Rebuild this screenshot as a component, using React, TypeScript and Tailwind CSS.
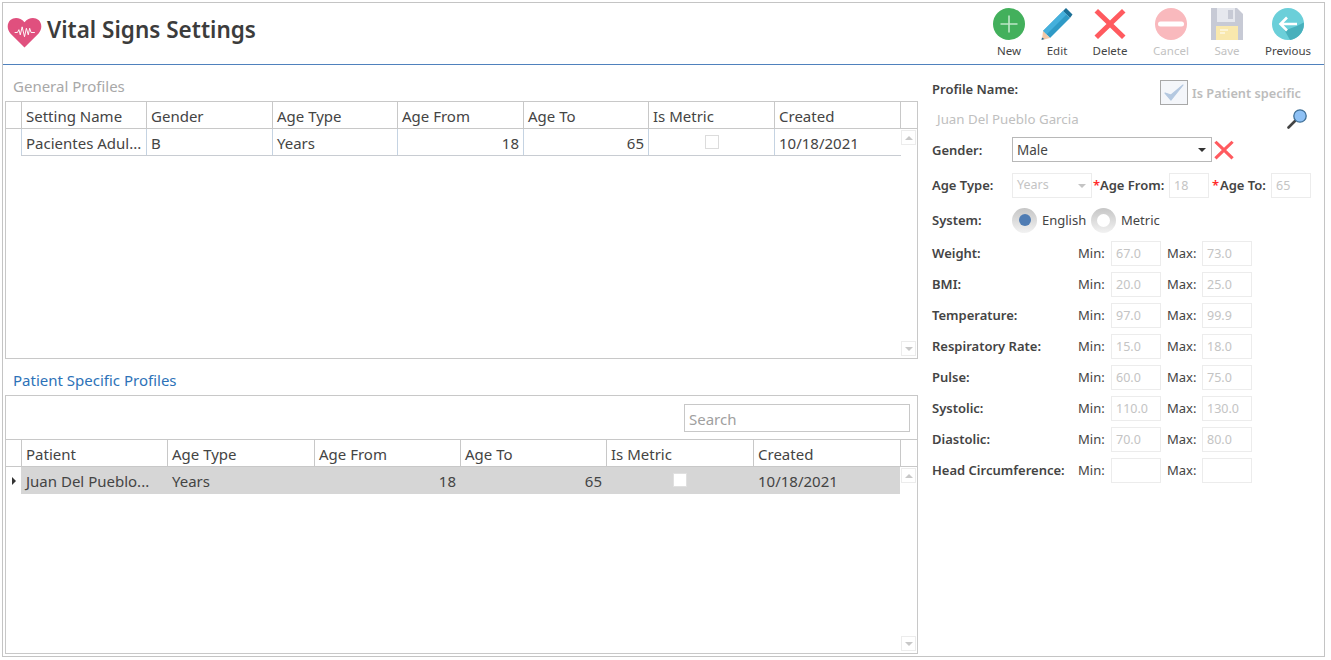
const font = "font-['Noto_Sans','Open_Sans',sans-serif]";

function Heart() {
  return (
    <svg width="35" height="31" viewBox="0 0 37 33" className="shrink-0">
      <path d="M18.5 32.5 L3.5 17.5 C-0.5 13 -0.2 6.5 3.5 3.2 C7.5 -0.2 14 0.2 18.5 5.5 C23 0.2 29.5 -0.2 33.5 3.2 C37.2 6.5 37.5 13 33.5 17.5 Z" fill="#e0507e" />
      <path d="M8 16.5 H11 L12.5 13.5 L14 19 L16 10.5 L18.5 21 L20.5 12 L22.5 19 L24 12 L25.5 16.5 H29.5" fill="none" stroke="#fff" strokeWidth="1" />
    </svg>
  );
}

function NewIcon() {
  return (
    <svg width="32" height="32" viewBox="0 0 32 32">
      <circle cx="16" cy="16" r="16" fill="#43b05c" />
      <path d="M16 7.5V24.5M7.5 16H24.5" stroke="#bfe6c8" strokeWidth="1.6" />
    </svg>
  );
}
function EditIcon() {
  return (
    <svg width="32" height="33" viewBox="0 0 32 33">
      <path d="M25 1 L31.5 7.5 L29 11 L22 4 Z" fill="#1b6f96" />
      <path d="M22 4 L29 11 L9 31 L2 24 Z" fill="#2f9ac6" />
      <path d="M22 4 L25.5 7.5 L5.5 27.5 L2 24 Z" fill="#45b0dc" />
      <path d="M2 24 L9 31 L1 33 Z" fill="#f3c9a8" />
      <path d="M1 30.5 L3.5 32 L0.5 33 Z" fill="#2f6f96" />
    </svg>
  );
}
function DeleteIcon({ size = 32 }: { size?: number }) {
  return (
    <svg width={size} height={size} viewBox="0 0 32 32">
      <path d="M4 1 L16 12.5 L28 1 L31.5 4.5 L19.5 16 L31.5 27.5 L28 31 L16 19.5 L4 31 L0.5 27.5 L12.5 16 L0.5 4.5 Z" fill="#ff5a5f" />
    </svg>
  );
}
function CancelIcon() {
  return (
    <svg width="32" height="32" viewBox="0 0 32 32">
      <circle cx="16" cy="16" r="16" fill="#f9b9bd" />
      <rect x="3" y="13.5" width="26" height="5" rx="2.5" fill="#fff" />
    </svg>
  );
}
function SaveIcon() {
  return (
    <svg width="32" height="32" viewBox="0 0 32 32">
      <path d="M0 0 H26 L32 6 V32 H0 Z" fill="#c7cad5" />
      <path d="M6 0 H24 V14 H6 Z" fill="#e6e8ee" />
      <path d="M17 2 H22 V11 H17 Z" fill="#c7cad5" />
      <path d="M5 18 H27 V32 H5 Z" fill="#f9e8ad" />
      <path d="M9 22 H17 M9 25 H14" stroke="#fff" strokeWidth="1.2" />
    </svg>
  );
}
function PreviousIcon() {
  return (
    <svg width="32" height="32" viewBox="0 0 32 32">
      <circle cx="16" cy="16" r="16" fill="#6bcfd9" />
      <path d="M9 16 L15.5 21.5 L25 18 L31.8 14.5 A16 16 0 0 1 18 31.9 Z" fill="#48b0bc" />
      <path d="M15 9.5 L8.5 16 L15 22.5 M8.5 16 H25" fill="none" stroke="#fff" strokeWidth="2.6" />
    </svg>
  );
}

function ToolButton({ label, width, icon, disabled }: { label: string; width: string; icon: React.ReactNode; disabled?: boolean }) {
  return (
    <div className={`flex flex-col items-center ${width}`}>
      <div className="flex h-[33px] items-center justify-center">{icon}</div>
      <div className={`mt-[3px] text-[11.5px] leading-[16px] ${disabled ? "text-[#c2c2c2]" : "text-[#444444]"}`}>{label}</div>
    </div>
  );
}

function ScrollButton({ up }: { up?: boolean }) {
  return (
    <div className="flex h-[15px] w-[15px] items-center justify-center border border-[#ececec] bg-white">
      <div className={`h-0 w-0 border-x-[4px] border-x-transparent ${up ? "border-b-[4px] border-b-[#c8c8c8]" : "border-t-[4px] border-t-[#c8c8c8]"}`} />
    </div>
  );
}

type Col = { title: string; width: string; right?: boolean; value?: string; check?: boolean };

function Grid({ cols, selected }: { cols: Col[]; selected?: boolean }) {
  return (
    <div className="flex min-h-0 flex-1 flex-col">
      <div className={`flex border-b border-[#c8c8c8] ${selected ? "h-[28px] border-t" : "h-[27px]"}`}>
        <div className="w-[16px] shrink-0 border-r border-[#c8c8c8]" />
        {cols.map((c) => (
          <div key={c.title} className={`${c.width} shrink-0 truncate border-r border-[#c8c8c8] pl-[4px] text-[15px] leading-[28px] text-[#444444]`}>
            {c.title}
          </div>
        ))}
      </div>
      <div className="relative flex-1">
        <div className="flex h-[27px]">
          <div className={`flex shrink-0 items-center justify-center ${selected ? "w-[15px]" : "w-[16px] border-r border-[#c5d3e2]"}`}>
            {selected && <div className="ml-[1px] h-0 w-0 border-y-[4px] border-l-[4px] border-y-transparent border-l-[#333333]" />}
          </div>
          <div className={`flex ${selected ? "bg-[#d6d6d6]" : "-ml-[1px] border-b border-[#c8ccd2] pl-[1px]"}`}>
            {cols.map((c) => (
              <div
                key={c.title}
                className={`${c.width} flex shrink-0 items-center ${c.right ? "justify-end pr-[4px]" : c.check ? "justify-center" : selected ? "pl-[5px]" : "pl-[4px]"} ${selected ? "pt-[1px]" : "border-r border-[#c5d3e2] pt-[3px] last:border-r-0"} text-[15px] text-[#444444]`}
              >
                {c.check ? (
                  <div className={`h-[14px] w-[14px] border ${selected ? "-mt-[2px] border-[#e0e0e0] bg-white" : "-mt-[4px] border-[#dcdcdc] bg-white"}`} />
                ) : (
                  c.value
                )}
              </div>
            ))}
          </div>
        </div>
        <div className="absolute bottom-[2px] right-[1px] top-[1px] flex flex-col justify-between">
          <ScrollButton up />
          <ScrollButton />
        </div>
      </div>
    </div>
  );
}

const generalCols: Col[] = [
  { title: "Setting Name", width: "w-[125px]", value: "Pacientes Adul..." },
  { title: "Gender", width: "w-[126px]", value: "B" },
  { title: "Age Type", width: "w-[125px]", value: "Years" },
  { title: "Age From", width: "w-[126px]", value: "18", right: true },
  { title: "Age To", width: "w-[125px]", value: "65", right: true },
  { title: "Is Metric", width: "w-[126px]", check: true },
  { title: "Created", width: "w-[126px]", value: "10/18/2021" },
];
const patientCols: Col[] = [
  { title: "Patient", width: "w-[146px]", value: "Juan Del Pueblo..." },
  { title: "Age Type", width: "w-[147px]", value: "Years" },
  { title: "Age From", width: "w-[146px]", value: "18", right: true },
  { title: "Age To", width: "w-[146px]", value: "65", right: true },
  { title: "Is Metric", width: "w-[147px]", check: true },
  { title: "Created", width: "w-[147px]", value: "10/18/2021" },
];

function FieldBox({ value, width }: { value?: string; width: string }) {
  return (
    <div className={`${width} flex h-[25px] shrink-0 items-center border border-[#ececec] bg-white pl-[4px] pt-[2px] text-[12.5px] text-[#c4c4c4]`}>{value}</div>
  );
}

function Radio({ on }: { on?: boolean }) {
  return (
    <div className="flex h-[25px] w-[25px] shrink-0 items-center justify-center rounded-full bg-gradient-to-b from-[#c6c6c6] to-[#f2f2f2]">
      {on ? <div className="h-[12px] w-[12px] rounded-full bg-[#4f7cb3]" /> : <div className="h-[13px] w-[13px] rounded-full bg-white" />}
    </div>
  );
}

const vitals: [string, string, string][] = [
  ["Weight:", "67.0", "73.0"],
  ["BMI:", "20.0", "25.0"],
  ["Temperature:", "97.0", "99.9"],
  ["Respiratory Rate:", "15.0", "18.0"],
  ["Pulse:", "60.0", "75.0"],
  ["Systolic:", "110.0", "130.0"],
  ["Diastolic:", "70.0", "80.0"],
  ["Head Circumference:", "", ""],
];

const label = "text-[13px] font-semibold text-[#444444]";

export default function App() {
  return (
    <div className={`h-[660px] w-[1331px] overflow-hidden bg-white pl-[2px] pt-[2px] ${font}`}>
      <div className="flex h-[655px] w-[1323px] flex-col border border-[#c4c4c4]">
        <header className="flex h-[62px] shrink-0 items-start border-b border-[#4f81bd]">
          <div className="ml-[4px] mt-[14px]"><Heart /></div>
          <h1 className="ml-[5px] mt-[9px] text-[22.5px] font-semibold leading-[36px] text-[#3c3c3c]">Vital Signs Settings</h1>
          <div className="-mr-[1px] ml-auto mt-[4px] flex">
            <ToolButton label="New" width="w-[48px]" icon={<NewIcon />} />
            <ToolButton label="Edit" width="w-[48px]" icon={<EditIcon />} />
            <ToolButton label="Delete" width="w-[58px]" icon={<DeleteIcon />} />
            <ToolButton label="Cancel" width="w-[64px]" icon={<CancelIcon />} disabled />
            <ToolButton label="Save" width="w-[48px]" icon={<SaveIcon />} disabled />
            <ToolButton label="Previous" width="w-[74px]" icon={<PreviousIcon />} />
          </div>
        </header>
        <div className="flex min-h-0 flex-1">
          <div className="flex w-[915px] shrink-0 flex-col pl-[2px]">
            <div className="h-[36px] pl-[8px] pt-[11px] text-[15px] leading-[20px] text-[#a8a8a8]">General Profiles</div>
            <div className="flex h-[258px] flex-col border border-[#c8c8c8]">
              <Grid cols={generalCols} />
            </div>
            <div className="h-[36px] pl-[8px] pt-[11px] text-[15px] leading-[20px] text-[#2d72b8]">Patient Specific Profiles</div>
            <div className="flex h-[259px] flex-col border border-[#c8c8c8]">
              <div className="flex h-[43px] shrink-0 items-start justify-end pr-[7px] pt-[8px]">
                <div className="flex h-[28px] w-[226px] items-center border border-[#c8c8c8] pl-[4px] pt-[3px] text-[15px] text-[#a0a0a0]">Search</div>
              </div>
              <Grid cols={patientCols} selected />
            </div>
          </div>
          <div className="min-w-0 flex-1 pl-[14px]">
            <div className="mt-[15px] flex h-[25px] items-start">
              <div className={`${label} w-[86px] shrink-0 whitespace-nowrap leading-[18px]`}>Profile Name:</div>
              <div className="ml-[142px] flex items-center">
                <div className="flex h-[25px] w-[28px] shrink-0 items-center justify-center border border-[#a8a8a8] bg-[#f4f6fa]">
                  <svg width="22" height="20" viewBox="0 0 22 20"><path d="M2 10 L8 17 L20 2 L8 12 Z" fill="#b4c8e0" stroke="#b4c8e0" strokeWidth="1.2" strokeLinejoin="round" /></svg>
                </div>
                <span className="ml-[4px] whitespace-nowrap pt-[2px] text-[12.75px] font-semibold text-[#bcbcbc]">Is Patient specific</span>
              </div>
            </div>
            <div className="mt-[2px] flex h-[24px] items-center">
              <span className="ml-[5px] pt-[1px] text-[13.3px] text-[#c0c0c0]">Juan Del Pueblo Garcia</span>
              <svg className="ml-auto mr-[16px]" width="21" height="20" viewBox="0 0 21 20">
                <path d="M1.5 18.5 L8 12" stroke="#444" strokeWidth="2.6" strokeLinecap="round" />
                <circle cx="13" cy="7" r="6.2" fill="#8ec1f5" stroke="#3f6f96" strokeWidth="1.3" />
              </svg>
            </div>
            <div className="mt-[6px] flex h-[25px] items-center">
              <div className={`${label} w-[80px] shrink-0 pt-[3px]`}>Gender:</div>
              <div className="flex h-[25px] w-[200px] items-center justify-between border border-[#b8b8b8] pl-[4px] pr-[5px] pt-[1px] text-[13.5px] text-[#444444]">
                Male
                <div className="h-0 w-0 border-x-[4px] border-t-[4px] border-x-transparent border-t-[#333333]" />
              </div>
              <div className="ml-[2px]"><DeleteIcon size={20} /></div>
            </div>
            <div className="mt-[11px] flex h-[25px] items-center">
              <div className={`${label} w-[80px] shrink-0`}>Age Type:</div>
              <div className="flex h-[25px] w-[80px] shrink-0 items-center justify-between border border-[#ececec] pl-[4px] pr-[5px] text-[12.5px] text-[#c4c4c4]">
                Years
                <div className="h-0 w-0 border-x-[4px] border-t-[4px] border-x-transparent border-t-[#c4c4c4]" />
              </div>
              <span className="ml-[1px] w-[7px] shrink-0 text-[13px] font-semibold text-[#ff2a2a]">*</span>
              <div className={`${label} w-[69px] shrink-0 whitespace-nowrap`}>Age From:</div>
              <FieldBox value="18" width="w-[40px]" />
              <span className="ml-[3px] w-[8px] shrink-0 text-[13px] font-semibold text-[#ff2a2a]">*</span>
              <div className={`${label} w-[51px] shrink-0 whitespace-nowrap`}>Age To:</div>
              <FieldBox value="65" width="w-[40px]" />
            </div>
            <div className="mt-[9px] flex h-[26px] items-center">
              <div className={`${label} w-[80px] shrink-0 pt-[2px]`}>System:</div>
              <Radio on />
              <span className="ml-[5px] w-[49px] shrink-0 pt-[2px] text-[13px] text-[#444444]">English</span>
              <Radio />
              <span className="ml-[5px] pt-[2px] text-[13px] text-[#444444]">Metric</span>
            </div>
            <div className="mt-[8px] flex flex-col gap-[6px]">
              {vitals.map(([name, min, max]) => (
                <div key={name} className="flex h-[25px] items-center">
                  <div className={`${label} w-[146px] shrink-0`}>{name}</div>
                  <div className="w-[33px] shrink-0 pt-[1px] text-[13px] text-[#444444]">Min:</div>
                  <FieldBox value={min} width="w-[50px]" />
                  <div className="ml-[6px] w-[35px] shrink-0 pt-[1px] text-[13px] text-[#444444]">Max:</div>
                  <FieldBox value={max} width="w-[50px]" />
                </div>
              ))}
            </div>
          </div>
        </div>
      </div>
    </div>
  );
}
